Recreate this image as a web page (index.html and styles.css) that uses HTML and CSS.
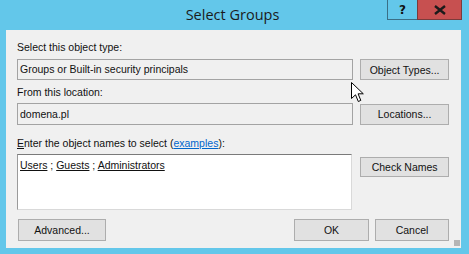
FILE: index.html
```html
<!DOCTYPE html>
<html lang="en">
<head>
    <meta charset="UTF-8">
    <title>Select Groups</title>
    <link rel="stylesheet" href="styles.css">
</head>
<body>
    <div class="window">
        <!-- Title bar -->
        <div class="titlebar">
            <div class="title">Select Groups</div>
            <div class="caption-buttons">
                <div class="cap-btn help">?</div>
                <div class="cap-btn close">
                    <svg width="12" height="10" viewBox="0 0 12 10">
                        <path d="M1 1 L11 9 M11 1 L1 9" stroke="#1a1a1a" stroke-width="2.4"/>
                    </svg>
                </div>
            </div>
        </div>

        <!-- Dialog body -->
        <div class="client">
            <div class="label">Select this object type:</div>
            <div class="row">
                <div class="field">Groups or Built-in security principals</div>
                <button class="btn">Object Types...</button>
            </div>

            <div class="label second">From this location:</div>
            <div class="row">
                <div class="field tall">domena.pl</div>
                <button class="btn">Locations...</button>
            </div>

            <div class="label third"><u>E</u>nter the object names to select (<a href="#">examples</a>):</div>
            <div class="row names-row">
                <div class="names"><u>Users</u> ; <u>Guests</u> ; <u>Administrators</u></div>
                <button class="btn check">Check Names</button>
            </div>

            <div class="footer">
                <button class="btn advanced">Advanced...</button>
                <div class="footer-right">
                    <button class="btn ok">OK</button>
                    <button class="btn cancel">Cancel</button>
                </div>
            </div>
            <div class="grip"></div>
        </div>

        <!-- Mouse pointer over the dialog -->
        <svg class="cursor" width="13" height="21" viewBox="0 0 13 21">
            <path d="M0.5 0.5 L0.5 16.5 L4.5 12.8 L7.3 19.5 L9.8 18.4 L7.1 11.8 L12.3 11.8 Z" fill="#fff" stroke="#000" stroke-width="1"/>
        </svg>
    </div>
</body>
</html>
```

FILE: styles.css
```css
body {
    margin: 0;
    font-family: 'Liberation Sans', Arial, sans-serif;
    font-size: 10.5px;
    color: #111;
}

.window {
    position: relative;
    width: 469px;
    height: 254px;
    background-color: #63c7ea;
    box-sizing: border-box;
    padding: 0 8px 6px 6px;
}

/* Title bar */
.titlebar {
    display: grid;
    grid-template-columns: 1fr auto 1fr;
    height: 30px;
}

.title {
    grid-column: 2;
    font-family: 'Open Sans', sans-serif;
    font-size: 14.5px;
    color: #1b1b1b;
    line-height: 30px;
    padding-right: 2px;
}

.caption-buttons {
    grid-column: 3;
    justify-self: end;
    display: flex;
    height: 20px;
    margin-right: -1px;
}

.cap-btn {
    box-sizing: border-box;
    height: 20px;
    display: flex;
    justify-content: center;
    align-items: center;
    border: 1px solid #3a6f86;
    border-top: none;
}

.help {
    width: 30px;
    border-right: none;
    font-family: 'DejaVu Sans', sans-serif;
    font-weight: bold;
    font-size: 12px;
    color: #111;
}

.close {
    width: 45px;
    background-color: #c75050;
    border-color: #7a3b3b;
}

/* Dialog body */
.client {
    position: relative;
    height: 218px;
    box-sizing: border-box;
    background-color: #f0f0f0;
    padding: 11px 12px 0 11px;
}

.label {
    line-height: 13px;
    margin-bottom: 5px;
}

.label.second {
    margin-top: 6px;
    margin-bottom: 4px;
}

.label.third {
    margin-top: 12px;
    margin-bottom: 4px;
}

.label a {
    color: #0066cc;
}

.row {
    display: flex;
    align-items: center;
    gap: 7px;
}

.field {
    box-sizing: border-box;
    width: 337px;
    height: 21px;
    line-height: 19px;
    padding-left: 2px;
    border: 1px solid #a3a3a3;
    background-color: #f0f0f0;
    white-space: nowrap;
}

.field.tall {
    height: 22px;
    line-height: 20px;
}

.btn {
    box-sizing: border-box;
    width: 89px;
    height: 21px;
    padding: 0;
    font-family: 'Liberation Sans', Arial, sans-serif;
    font-size: 10.5px;
    color: #111;
    background-color: #e1e1e1;
    border: 1px solid #adadad;
    border-radius: 0;
}

.names-row {
    align-items: flex-start;
}

.names {
    box-sizing: border-box;
    width: 336px;
    height: 56px;
    padding: 4px 0 0 2px;
    line-height: 13px;
    background-color: #fff;
    border: 1px solid #d9d9d9;
    border-top-color: #7a7a7a;
    border-left-color: #9a9a9a;
}

.btn.check {
    margin-top: 3px;
    margin-left: 1px;
    height: 20px;
}

.footer {
    display: flex;
    justify-content: space-between;
    margin-top: 9px;
}

.btn.advanced {
    height: 22px;
    margin-left: 1px;
    width: 88px;
}

.footer-right {
    display: flex;
    gap: 6px;
}

.btn.ok,
.btn.cancel {
    height: 22px;
    width: 74px;
}

.btn.ok {
    width: 75px;
}

.grip {
    position: absolute;
    right: 1px;
    bottom: 2px;
    width: 6px;
    height: 6px;
    background-image: radial-gradient(circle, #b5b5b5 0.8px, transparent 1px);
    background-size: 2px 2px;
}

.cursor {
    position: absolute;
    left: 351px;
    top: 82px;
}
```
